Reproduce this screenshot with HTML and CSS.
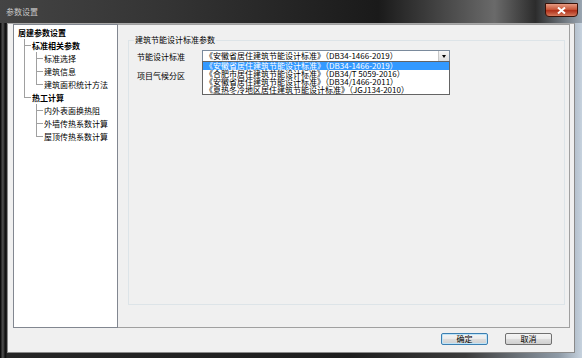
FILE: index.html
```html
<!DOCTYPE html>
<html lang="zh-CN">
<head>
    <meta charset="UTF-8">
    <title>参数设置</title>
    <link rel="stylesheet" href="styles.css">
</head>
<body>

<div class="window">
    <div class="titlebar">
        <span class="title">参数设置</span>
        <button class="close">
            <svg width="9" height="7" viewBox="0 0 9 7"><path d="M1 0.5 L8 6.5 M8 0.5 L1 6.5" stroke="#fff" stroke-width="2"/></svg>
        </button>
    </div>

    <div class="client">
        <div class="main">
            <!-- Settings tree -->
            <div class="tree">
                <ul>
                    <li class="bold">居建参数设置
                        <ul>
                            <li class="bold">标准相关参数
                                <ul>
                                    <li>标准选择</li>
                                    <li>建筑信息</li>
                                    <li>建筑面积统计方法</li>
                                </ul>
                            </li>
                            <li class="bold">热工计算
                                <ul>
                                    <li>内外表面换热阻</li>
                                    <li>外墙传热系数计算</li>
                                    <li>屋顶传热系数计算</li>
                                </ul>
                            </li>
                        </ul>
                    </li>
                </ul>
            </div>

            <!-- Parameter page -->
            <div class="panel">
                <fieldset class="group">
                    <legend>建筑节能设计标准参数</legend>
                    <div class="row">
                        <label>节能设计标准</label>
                        <div class="combo">
                            <span class="combo-text">《安徽省居住建筑节能设计标准》（DB34-1466-2019）</span>
                            <span class="combo-arrow"></span>
                            <ul class="dropdown">
                                <li class="selected">《安徽省居住建筑节能设计标准》（DB34-1466-2019）</li>
                                <li>《合肥市居住建筑节能设计标准》（DB34/T 5059-2016）</li>
                                <li>《安徽省居住建筑节能设计标准》（DB34/1466-2011）</li>
                                <li>《夏热冬冷地区居住建筑节能设计标准》（JGJ134-2010）</li>
                            </ul>
                        </div>
                    </div>
                    <div class="row second">
                        <label>项目气候分区</label>
                    </div>
                </fieldset>
            </div>
        </div>

        <div class="buttons">
            <button class="btn default">确定</button>
            <button class="btn">取消</button>
        </div>
    </div>
</div>

</body>
</html>
```

FILE: styles.css
```css
body {
    margin: 0;
    background: #000;
    font-family: "Noto Sans CJK SC", "Liberation Sans", sans-serif;
    font-size: 8px;
    color: #000;
}
.window {
    width: 582px;
    height: 358px;
    display: flex;
    flex-direction: column;
    box-sizing: border-box;
    background: linear-gradient(to right, #0c0c0c 0, #0c0c0c 1px, #4c4c4c 2px, #3a3a3a 4px, #0a0a0a 5px, #262626 7px, #1e1e1e 60%, #3c3c3c 80%, #8e9aa6 96%, #c6d2de 100%);
}
/* Title bar */
.titlebar {
    height: 23px;
    flex: none;
    display: flex;
    justify-content: space-between;
    align-items: flex-start;
    padding: 0 4px 0 6px;
    background: linear-gradient(to right, #444 0, #333 30%, #1a1a1a 65%, #6a6a6a 85%, #2c2c2c 92%, #9aa6b2 100%);
}
.title {
    margin-top: 7px;
    line-height: 10px;
    color: #c8c8c8;
}
.close {
    margin-top: 3px;
    width: 33px;
    height: 14px;
    padding: 0;
    display: flex;
    align-items: center;
    justify-content: center;
    border: 1px solid #3a1208;
    border-radius: 0 0 4px 4px;
    background: linear-gradient(#e49a82, #c9583a 45%, #b0301a 55%, #d4785a);
}
/* Client area */
.client {
    flex: 1;
    margin: 0 7px 5px 7px;
    display: flex;
    flex-direction: column;
    background: #f0f0f0;
    border: 1px solid #8a8a8a;
    border-top-color: #a8a8a8;
    padding: 0 4px 0 5px;
}
.main {
    height: 304px;
    display: flex;
}
/* Tree */
.tree {
    width: 105px;
    box-sizing: border-box;
    background: #fff;
    border: 1px solid #828790;
    padding: 1px 0 0 4px;
}
.tree ul {
    list-style: none;
    margin: 0;
    padding: 0;
}
.tree li {
    line-height: 13px;
    white-space: nowrap;
}
.tree li.bold {
    font-weight: bold;
}
.tree li ul {
    margin-left: 6px;
}
.tree li li ul {
    margin-left: 4px;
}
.tree li li {
    position: relative;
    padding-left: 8px;
    font-weight: normal;
}
.tree li li.bold {
    font-weight: bold;
}
.tree li li::before {
    content: '';
    position: absolute;
    left: 0;
    top: 0;
    width: 6px;
    height: 6px;
    border-left: 1px solid #a0a0a0;
    border-bottom: 1px solid #a0a0a0;
}
.tree li li::after {
    content: '';
    position: absolute;
    left: 0;
    top: 6px;
    bottom: 0;
    border-left: 1px solid #a0a0a0;
}
.tree li li:last-child::after {
    display: none;
}
/* Right page */
.panel {
    flex: 1;
    border: 1px solid #a0a0a0;
    border-left: none;
    padding: 10px 4px 0 10px;
}
.group {
    margin: 0;
    height: 270px;
    box-sizing: border-box;
    border: 1px solid #dde4e8;
    padding: 5px 0 0 5px;
}
.group legend {
    padding: 0 1px;
    line-height: 10px;
}
.row {
    display: flex;
    align-items: center;
    height: 12px;
    padding-left: 3px;
}
.row.second {
    margin-top: 7px;
}
.row label {
    width: 65px;
}
/* Combo box */
.combo {
    position: relative;
    width: 248px;
    height: 12px;
    box-sizing: border-box;
    border: 1px solid #7a8a9c;
    background: #fff;
    display: flex;
    align-items: center;
}
.combo-text {
    flex: 1;
    padding-left: 2px;
    line-height: 10px;
    white-space: nowrap;
    overflow: hidden;
}
.combo-arrow {
    width: 10px;
    height: 10px;
    background: linear-gradient(#f6f6f6, #dedede);
    border-left: 1px solid #c8c8c8;
    position: relative;
}
.combo-arrow::after {
    content: '';
    position: absolute;
    left: 3px;
    top: 4px;
    border-left: 2px solid transparent;
    border-right: 2px solid transparent;
    border-top: 3px solid #000;
}
.dropdown {
    position: absolute;
    top: 10px;
    left: -1px;
    right: -1px;
    margin: 0;
    padding: 0;
    list-style: none;
    background: #fff;
    border: 1px solid #646464;
}
.dropdown li {
    line-height: 8px;
    height: 8px;
    padding-left: 2px;
    white-space: nowrap;
}
.dropdown li.selected {
    background: #3399ff;
    color: #fff;
}
/* Buttons */
.buttons {
    display: flex;
    justify-content: flex-end;
    gap: 17px;
    margin-top: 5px;
    padding-right: 18px;
}
.btn {
    width: 47px;
    height: 12px;
    padding: 0;
    font-family: "Noto Sans CJK SC", sans-serif;
    font-size: 8px;
    line-height: 8px;
    border: 1px solid #707070;
    border-radius: 2px;
    background: linear-gradient(#f4f4f4, #ebebeb 50%, #dddddd 51%, #d0d0d0);
}
.btn.default {
    border-color: #3c7fb1;
    box-shadow: inset 0 0 0 1px #bfe4f8;
}
```
